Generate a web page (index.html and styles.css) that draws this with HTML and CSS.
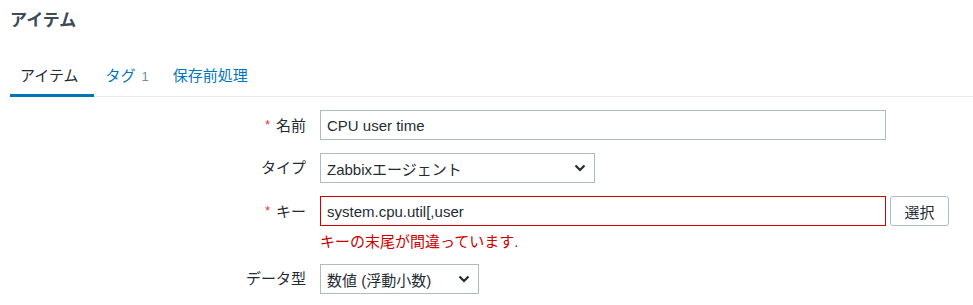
FILE: index.html
```html
<!DOCTYPE html>
<html lang="ja">
<head>
    <meta charset="UTF-8">
    <meta name="viewport" content="width=device-width, initial-scale=1.0">
    <title>アイテム</title>
    <link rel="stylesheet" href="styles.css">
</head>
<body>
    <header class="page-header">
        <h1>アイテム</h1>
    </header>

    <ul class="tabs">
        <li class="tab active">アイテム</li>
        <li class="tab"><a href="#">タグ</a><span class="tab-count">1</span></li>
        <li class="tab"><a href="#">保存前処理</a></li>
    </ul>

    <form class="item-form">
        <div class="form-row">
            <label class="form-label required">名前</label>
            <div class="form-field">
                <input class="text-input wide" type="text" value="CPU user time">
            </div>
        </div>
        <div class="form-row">
            <label class="form-label">タイプ</label>
            <div class="form-field">
                <div class="select type-select">
                    <span>Zabbixエージェント</span>
                    <svg width="12" height="8" viewBox="0 0 12 8"><path d="M1.5 1.5 L6 6 L10.5 1.5" fill="none" stroke="#1f2c33" stroke-width="2.2"/></svg>
                </div>
            </div>
        </div>
        <div class="form-row">
            <label class="form-label required">キー</label>
            <div class="form-field">
                <div class="inline-group">
                    <input class="text-input wide has-error" type="text" value="system.cpu.util[,user">
                    <button type="button" class="btn">選択</button>
                </div>
                <div class="error-msg">キーの末尾が間違っています.</div>
            </div>
        </div>
        <div class="form-row">
            <label class="form-label">データ型</label>
            <div class="form-field">
                <div class="select value-select">
                    <span>数値 (浮動小数)</span>
                    <svg width="12" height="8" viewBox="0 0 12 8"><path d="M1.5 1.5 L6 6 L10.5 1.5" fill="none" stroke="#1f2c33" stroke-width="2.2"/></svg>
                </div>
            </div>
        </div>
    </form>
</body>
</html>
```

FILE: styles.css
```css
body {
    margin: 0;
    padding: 0;
    background-color: #fff;
    color: #1f2c33;
    font-family: "Liberation Sans", Arial, "Noto Sans CJK JP", sans-serif;
    font-size: 15px;
}
.page-header {
    padding: 9px 10px 0;
}
.page-header h1 {
    margin: 0;
    height: 24px;
    font-size: 17px;
    line-height: 24px;
    font-weight: bold;
    color: #3b4b57;
}
.tabs {
    list-style: none;
    display: flex;
    margin: 26px 0 0 10px;
    padding: 0;
    border-bottom: 1px solid #e8ebed;
}
.tab {
    height: 18px;
    padding: 8px 12px 9px;
    line-height: 18px;
    border-bottom: 3px solid transparent;
    margin-bottom: -1px;
}
.tab:first-child {
    padding-left: 10px;
    padding-right: 15px;
}
.tab a {
    color: #0275b8;
    text-decoration: none;
}
.tab.active {
    border-bottom-color: #0275b8;
    color: #1f2c33;
}
.tab-count {
    margin-left: 6px;
    font-size: 13px;
    color: #768d99;
}
.item-form {
    padding-top: 13px;
}
.form-row {
    display: grid;
    grid-template-columns: 306px 1fr;
    column-gap: 14px;
    margin-bottom: 13px;
}
.form-label {
    height: 30px;
    text-align: right;
    line-height: 30px;
}
.form-label.required::before {
    content: "*";
    color: #e33734;
    font-size: 13px;
    vertical-align: 2px;
    margin-right: 6px;
}
.text-input {
    display: block;
    box-sizing: border-box;
    height: 30px;
    padding: 0 6px;
    border: 1px solid #acbbc4;
    background-color: #fff;
    color: #1f2c33;
    font-family: inherit;
    font-size: 15px;
    outline: none;
}
.text-input.wide {
    width: 566px;
}
.text-input.has-error {
    border-color: #cc0000;
}
.inline-group {
    display: flex;
    gap: 4px;
}
.btn {
    box-sizing: border-box;
    width: 59px;
    height: 30px;
    padding: 0;
    border: 1px solid #acbbc4;
    border-radius: 3px;
    background-color: #fff;
    color: #1f2c33;
    font-family: inherit;
    font-size: 15px;
    cursor: pointer;
}
.error-msg {
    height: 18px;
    margin-top: 7px;
    line-height: 18px;
    color: #cc0000;
}
.select {
    box-sizing: border-box;
    display: flex;
    align-items: center;
    justify-content: space-between;
    height: 30px;
    padding: 0 8px 0 6px;
    border: 1px solid #acbbc4;
    background-color: #fff;
}
.type-select {
    width: 275px;
}
.value-select {
    width: 159px;
}
```
